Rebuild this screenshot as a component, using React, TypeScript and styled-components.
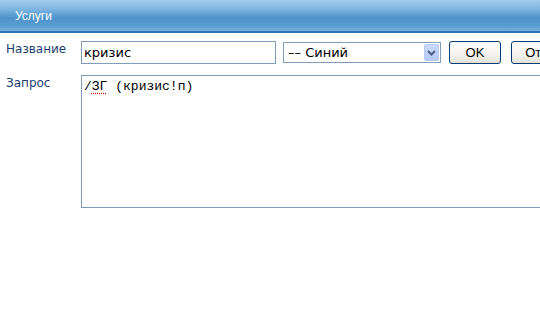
import styled, { createGlobalStyle } from "styled-components";

const GlobalStyle = createGlobalStyle`
  html, body {
    margin: 0;
    padding: 0;
    background: #ffffff;
    overflow: hidden;
  }
  body {
    font-family: "DejaVu Sans", Verdana, sans-serif;
  }
`;

const App = () => {
  return (
    <Page>
      <GlobalStyle />
      <Header>
        <HeaderTitle>Услуги</HeaderTitle>
      </Header>
      <Form>
        <Label>Название</Label>
        <Controls>
          <TextInput>кризис</TextInput>
          <SelectBox>
            <SelectText>–– Синий</SelectText>
            <SelectArrow>
              <svg width="9" height="6" viewBox="0 0 9 6">
                <path d="M1 1 L4.5 4.5 L8 1" fill="none" stroke="#4d6185" strokeWidth="2" />
              </svg>
            </SelectArrow>
          </SelectBox>
          <Button>OK</Button>
          <Button $wide>Отмена</Button>
        </Controls>
        <Label>Запрос</Label>
        <QueryArea>
          /<Misspelled>ЗГ</Misspelled> (кризис!п)
        </QueryArea>
      </Form>
    </Page>
  );
};
export default App;

const Page = styled.div`
  width: 540px;
  height: 320px;
  overflow: hidden;
`;

const Header = styled.div`
  height: 31px;
  display: flex;
  align-items: center;
  padding-left: 15px;
  background: linear-gradient(
    #a2ccec 0%,
    #7db5e1 30%,
    #4c93cb 58%,
    #5a9dd2 85%,
    #79b2de 100%
  );
  border-bottom: 2px solid #2a6fb2;
`;

const HeaderTitle = styled.span`
  color: #ffffff;
  font-family: "Liberation Sans", Arial, sans-serif;
  font-size: 12px;
`;

const Form = styled.div`
  display: grid;
  grid-template-columns: 81px auto;
  row-gap: 11px;
  padding-top: 8px;
`;

const Label = styled.div`
  padding-left: 6px;
  font-size: 12px;
  line-height: 16px;
  color: #1b3f72;
`;

const Controls = styled.div`
  display: flex;
  align-items: center;
`;

const TextInput = styled.div`
  box-sizing: border-box;
  width: 195px;
  height: 23px;
  border: 1px solid #7f9db9;
  padding: 2px 2px;
  font-size: 13px;
  line-height: 17px;
  color: #000000;
`;

const SelectBox = styled.div`
  box-sizing: border-box;
  margin-left: 7px;
  width: 158px;
  height: 21px;
  border: 1px solid #7f9db9;
  display: flex;
  align-items: stretch;
  padding: 1px;
`;

const SelectText = styled.div`
  flex: 1;
  font-size: 13px;
  line-height: 17px;
  padding-left: 3px;
  color: #000000;
`;

const SelectArrow = styled.div`
  width: 15px;
  display: flex;
  align-items: center;
  justify-content: center;
  border-radius: 2px;
  background: linear-gradient(#cbdafc, #b4c8f6);
  border: 1px solid #b9cbf3;
  box-sizing: border-box;
`;

const Button = styled.div<{ $wide?: boolean }>`
  box-sizing: border-box;
  flex-shrink: 0;
  margin-left: ${(p) => (p.$wide ? "10px" : "8px")};
  width: ${(p) => (p.$wide ? "75px" : "52px")};
  height: 23px;
  border: 1px solid #003c74;
  border-radius: 3px;
  background: linear-gradient(#ffffff 0%, #f4f3ee 60%, #e3e1d6 100%);
  font-family: "Liberation Sans", Arial, sans-serif;
  font-size: 13px;
  line-height: 21px;
  text-align: center;
  color: #000000;
`;

const QueryArea = styled.div`
  box-sizing: border-box;
  width: 480px;
  height: 133px;
  border: 1px solid #7f9db9;
  padding: 3px 2px;
  font-family: "Liberation Mono", "Courier New", monospace;
  font-size: 13px;
  line-height: 16px;
  white-space: pre;
  color: #000000;
`;

const Misspelled = styled.span`
  text-decoration: underline dotted #e00000;
  text-underline-offset: 3px;
`;
